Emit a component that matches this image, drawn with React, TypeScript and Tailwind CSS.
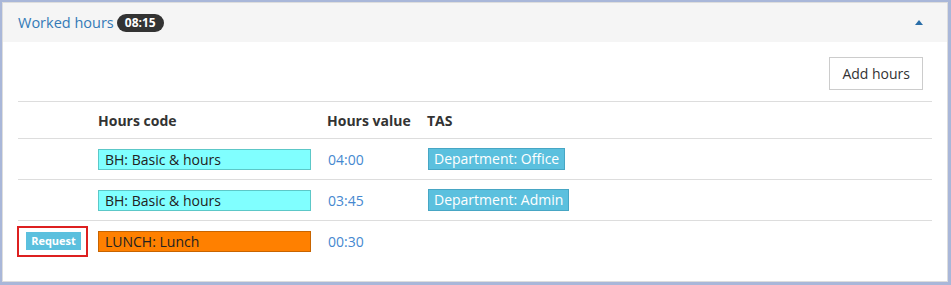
import React from "react";

type Row = {
  code: string;
  codeStyle: string;
  value: string;
  tas?: string;
  request?: boolean;
};

const rows: Row[] = [
  {
    code: "BH: Basic & hours",
    codeStyle: "bg-[#80ffff] border-[#5cc8c8]",
    value: "04:00",
    tas: "Department: Office",
  },
  {
    code: "BH: Basic & hours",
    codeStyle: "bg-[#80ffff] border-[#5cc8c8]",
    value: "03:45",
    tas: "Department: Admin",
  },
  {
    code: "LUNCH: Lunch",
    codeStyle: "bg-[#ff8000] border-[#c86400]",
    value: "00:30",
    request: true,
  },
];

export default function App() {
  return (
    <div
      className="w-[951px] h-[285px] bg-[#a9b7d9] pt-[2px] pl-[2px] pr-[3px] pb-[3px] text-[#333]"
      style={{ fontFamily: '"Open Sans", "DejaVu Sans", sans-serif' }}
    >
      <div className="h-full bg-white border border-[#dddddd] flex flex-col">
        {/* header */}
        <div className="h-[39px] bg-[#f5f5f5] flex items-center justify-between pl-[15px] pr-[24px]">
          <div className="flex items-center gap-[3px]">
            <span className="text-[14.5px] text-[#337ab7]">Worked hours</span>
            <span className="h-[18px] px-[8px] rounded-full bg-[#333] text-white text-[12px] font-bold leading-[18px]">
              08:15
            </span>
          </div>
          <span className="w-0 h-0 border-l-[4px] border-r-[4px] border-b-[5px] border-l-transparent border-r-transparent border-b-[#2a6ea8]" />
        </div>

        {/* body */}
        <div className="px-[15px] pt-[15px]">
          <div className="flex justify-end pr-[9px]">
            <button className="h-[33px] px-[12px] border border-[#cccccc] bg-white text-[14px] text-[#333]">
              Add hours
            </button>
          </div>

          <div className="mt-[11px] border-t border-[#dddddd]">
            <div className="grid grid-cols-[72px_229px_100px_1fr] h-[36px] items-center text-[14px] font-bold">
              <div />
              <div className="px-[8px]">Hours code</div>
              <div className="px-[8px] whitespace-nowrap">Hours value</div>
              <div className="px-[8px]">TAS</div>
            </div>

            {rows.map((r, i) => (
              <div
                key={i}
                className="grid grid-cols-[72px_229px_100px_1fr] h-[41px] items-center border-t border-[#dddddd] text-[14px]"
              >
                <div>
                  {r.request && (
                    <div className="-ml-px w-[71px] h-[31px] border-2 border-[#dd2020] flex items-center pl-[7px]">
                      <span className="h-[18px] w-[55px] bg-[#5bc0de] text-white text-[11px] font-bold leading-[18px] text-center">
                        Request
                      </span>
                    </div>
                  )}
                </div>
                <div className="px-[8px]">
                  <div className={`h-[21px] border leading-[19px] pl-[6px] text-[14px] text-[#222] ${r.codeStyle}`}>
                    {r.code}
                  </div>
                </div>
                <div className="px-[8px] pl-[9px] text-[#4688d0]">{r.value}</div>
                <div className="px-[8px] pl-[9px]">
                  {r.tas && (
                    <span className="inline-block h-[22px] leading-[20px] px-[5px] bg-[#5bc0de] border border-[#47a6c4] text-white text-[14px]">
                      {r.tas}
                    </span>
                  )}
                </div>
              </div>
            ))}
          </div>
        </div>
      </div>
    </div>
  );
}
